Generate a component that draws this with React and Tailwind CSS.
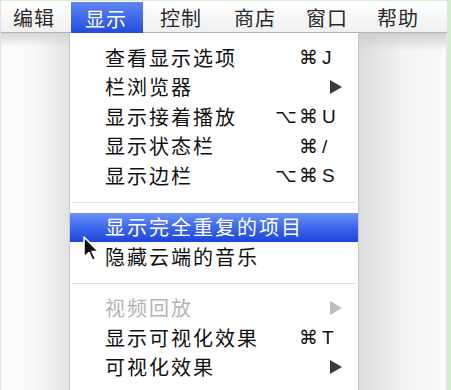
import React from "react";

const CJK = "font-['Noto_Sans_CJK_SC',sans-serif]";

function Arrow({ disabled }) {
  return (
    <svg width="12" height="14" viewBox="0 0 12 14" className="block">
      <polygon points="0,0 12,7 0,14" fill={disabled ? "#bdbdbd" : "#3a3a3a"} />
    </svg>
  );
}

function Row({ label, mod, keyc, arrow, disabled, active }) {
  return (
    <div
      className={
        "flex items-center h-[29.5px] pl-[35px] " +
        (active
          ? "bg-gradient-to-b from-[#6e92f6] via-[#3d66ea] to-[#1c45db] text-white"
          : disabled
          ? "text-[#b4b4b4]"
          : "text-[#111111]")
      }
    >
      <span className={"flex-1 min-w-0 whitespace-nowrap text-[20px] tracking-[2px] leading-none " + CJK}>{label}</span>
      {!active && (
        <>
          <span className="w-[60px] shrink-0 text-right text-[19px] leading-none font-['DejaVu_Sans',sans-serif] tracking-[2px]">
            {mod || ""}
          </span>
          <span className="w-[38px] shrink-0 pl-[2px] flex items-center text-[19px] leading-none font-['Liberation_Sans','DejaVu_Sans',sans-serif]">
            {arrow ? (
              <span className="pl-[8px]">
                <Arrow disabled={disabled} />
              </span>
            ) : (
              keyc || ""
            )}
          </span>
        </>
      )}
    </div>
  );
}

function Sep() {
  return (
    <div className="h-[22px] pt-[11px] px-[2px]">
      <div className="h-[1px] bg-[#e2e2e2]" />
    </div>
  );
}

export default function App() {
  const bar = "text-[20px] tracking-[1px] leading-none text-[#2a2a2a] " + CJK;
  return (
    <div className="w-[451px] h-[390px] overflow-hidden flex bg-white relative">
      <div className="flex-1 flex flex-col border-t border-[#d6eed6] border-l border-l-[#e4e4e4]">
        {/* menu bar */}
        <div className="h-[32px] flex items-stretch bg-gradient-to-b from-[#ffffff] to-[#f0f0f0] border-b border-[#b4b4b4] shrink-0">
          <div className={"w-[70px] pl-[12px] pt-[2px] flex items-center " + bar}>编辑</div>
          <div
            className={
              "w-[72px] pl-[14px] pt-[2px] flex items-center bg-gradient-to-b from-[#5f84f2] to-[#2249dc] text-white mt-[1px] -mb-[2px] " +
              "text-[20px] tracking-[1px] leading-none " +
              CJK
            }
          >
            显示
          </div>
          <div className={"w-[73px] pl-[17px] pt-[2px] flex items-center " + bar}>控制</div>
          <div className={"w-[72px] pl-[18px] pt-[2px] flex items-center " + bar}>商店</div>
          <div className={"w-[75px] pl-[18px] pt-[2px] flex items-center " + bar}>窗口</div>
          <div className={"flex-1 pl-[14px] pt-[2px] flex items-center " + bar}>帮助</div>
        </div>
        {/* below */}
        <div className="flex-1 flex">
          <div className="w-[69px] bg-gradient-to-r from-[#fcfcfc] via-[#f9f9f9] to-[#e2e2e2] border-r border-[#c9c9c9] relative">
            <div className="h-[14px] bg-gradient-to-b from-[#d6d6d6] to-transparent" />
          </div>
          <div className="w-[289px] bg-white border-r border-[#c6c6c6] pt-[10px] flex flex-col">
            <Row label="查看显示选项" mod="⌘" keyc="J" />
            <Row label="栏浏览器" arrow />
            <Row label="显示接着播放" mod="⌥⌘" keyc="U" />
            <Row label="显示状态栏" mod="⌘" keyc="/" />
            <Row label="显示边栏" mod="⌥⌘" keyc="S" />
            <Sep />
            <Row label="显示完全重复的项目" active />
            <Row label="隐藏云端的音乐" />
            <Sep />
            <Row label="视频回放" arrow disabled />
            <Row label="显示可视化效果" mod="⌘" keyc="T" />
            <Row label="可视化效果" arrow />
          </div>
          <div className="flex-1 bg-gradient-to-r from-[#dcdcdc] via-[#f3f3f3] to-[#fbfbfb] border-r border-[#e6e6e6]">
            <div className="h-[18px] bg-gradient-to-b from-[#cfcfcf] to-transparent" />
          </div>
        </div>
      </div>
      <div className="w-[4px] bg-[#d3ecd3]" />
      {/* mouse cursor */}
      <svg
        className="absolute left-[82px] top-[236px]"
        width="20"
        height="28"
        viewBox="0 0 20 28"
      >
        <path
          d="M2 1 L2 21 L7 16.5 L10.5 24.5 L13.5 23 L10 15.5 L16.5 15.5 Z"
          fill="#111"
          stroke="#fff"
          strokeWidth="1.6"
          strokeLinejoin="round"
        />
      </svg>
    </div>
  );
}
